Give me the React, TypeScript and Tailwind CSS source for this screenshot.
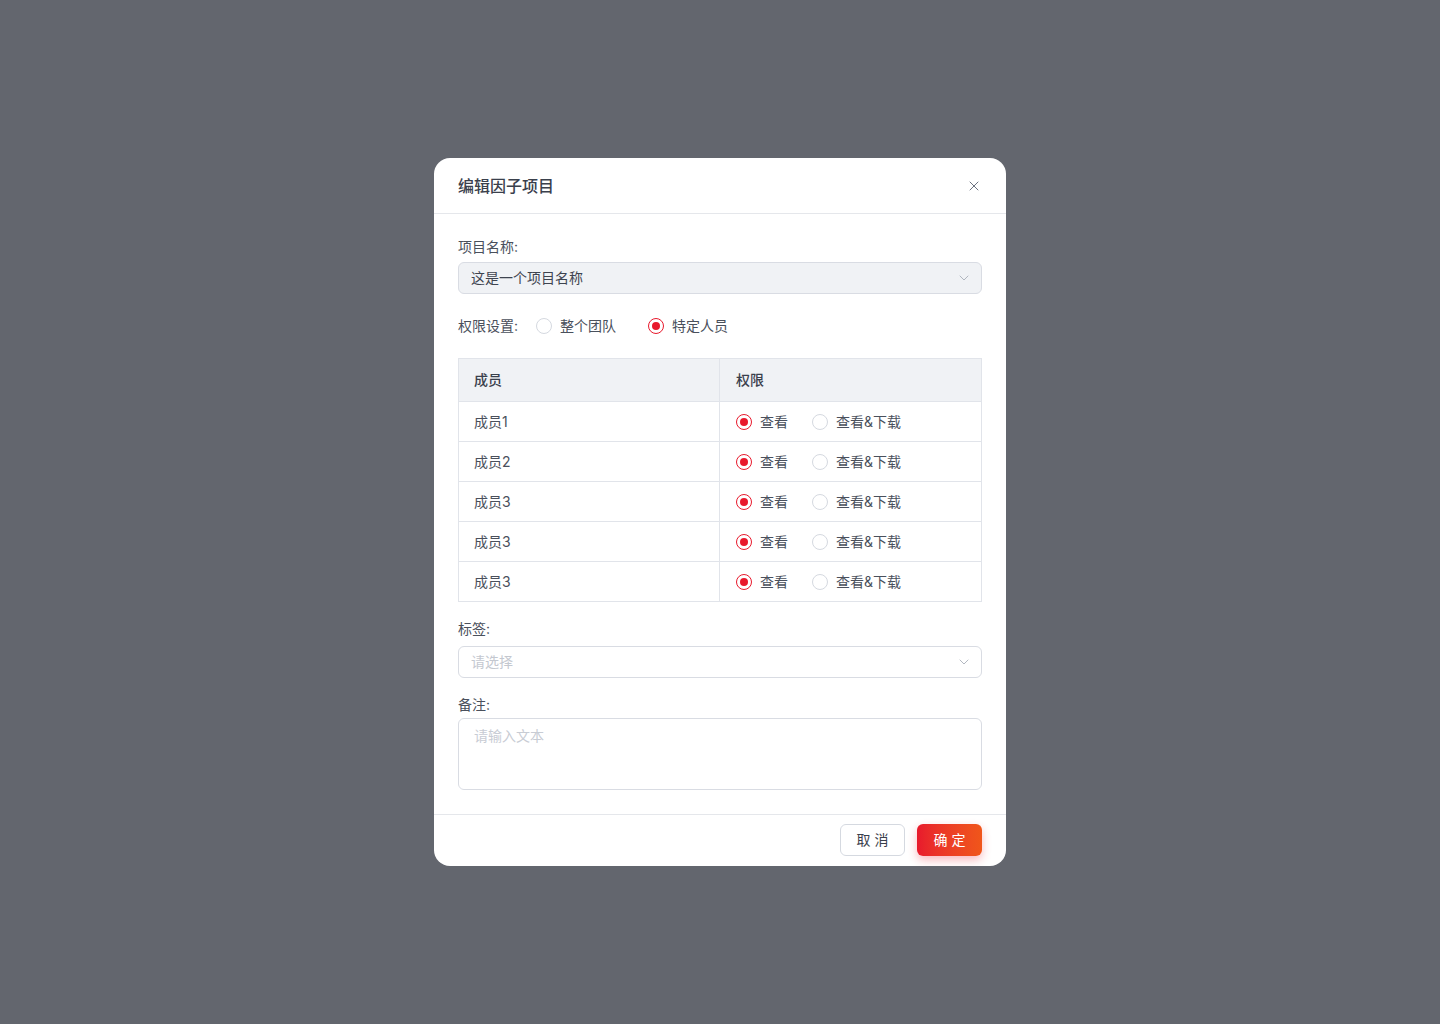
import { X, ChevronDown } from 'lucide-react'

const font = { fontFamily: 'Inter, "Noto Sans CJK SC", sans-serif' }

function Radio({ checked, label }: { checked?: boolean; label: string }) {
  return (
    <label className="flex items-center gap-2 cursor-pointer">
      {checked ? (
        <span className="w-4 h-4 rounded-full border border-[#e8192c] flex items-center justify-center bg-white">
          <span className="w-2 h-2 rounded-full bg-[#e8192c]" />
        </span>
      ) : (
        <span className="w-4 h-4 rounded-full border border-[#d5d9e0] bg-white" />
      )}
      <span className="text-sm text-[#4a505c]">{label}</span>
    </label>
  )
}

const members = ['成员1', '成员2', '成员3', '成员3', '成员3']

export default function App() {
  return (
    <div className="min-h-screen bg-[#63666e] flex items-start justify-center pt-[158px]" style={font}>
      <div className="w-[572px] bg-white rounded-2xl overflow-hidden">
        {/* header */}
        <div className="h-[56px] flex items-center justify-between px-6 border-b border-[#e5e7eb]">
          <h3 className="text-base font-medium text-[#3a404c]">编辑因子项目</h3>
          <X className="w-4 h-4 text-[#6b7280]" strokeWidth={1.5} />
        </div>

        {/* body */}
        <div className="px-6 pt-[22px] pb-6">
          <div className="text-sm leading-[22px] text-[#4a505c]">项目名称:</div>
          <div className="mt-1 h-8 rounded-md border border-[#d9dce3] bg-[#f0f2f5] flex items-center justify-between pl-3 pr-[9px]">
            <span className="text-sm text-[#3e4450]">这是一个项目名称</span>
            <ChevronDown className="w-4 h-4 text-[#a0a6b1]" strokeWidth={1.2} />
          </div>

          <div className="mt-4 h-8 flex items-center">
            <span className="text-sm text-[#4a505c] mr-[18px]">权限设置:</span>
            <div className="flex items-center gap-8">
              <Radio label="整个团队" />
              <Radio checked label="特定人员" />
            </div>
          </div>

          <div className="mt-4 border border-[#e1e4ea]">
            <div className="grid grid-cols-[261px_1fr] bg-[#f0f2f5] h-[43px] border-b border-[#e1e4ea]">
              <div className="flex items-center px-[15px] border-r border-[#e1e4ea] text-sm font-medium text-[#3a404c]">成员</div>
              <div className="flex items-center px-4 text-sm font-medium text-[#3a404c]">权限</div>
            </div>
            {members.map((m, i) => (
              <div
                key={i}
                className={`grid grid-cols-[261px_1fr] ${i < members.length - 1 ? 'h-10 border-b border-[#e1e4ea]' : 'h-[39px]'}`}
              >
                <div className="flex items-center px-[15px] border-r border-[#e1e4ea] text-sm text-[#4a505c]">{m}</div>
                <div className="flex items-center px-4 gap-6">
                  <Radio checked label="查看" />
                  <Radio label="查看&下载" />
                </div>
              </div>
            ))}
          </div>

          <div className="mt-4 text-sm leading-[22px] text-[#4a505c]">标签:</div>
          <div className="mt-1.5 h-8 rounded-md border border-[#d9dce3] bg-white flex items-center justify-between pl-3 pr-[9px]">
            <span className="text-sm text-[#c4c8d0]">请选择</span>
            <ChevronDown className="w-4 h-4 text-[#a0a6b1]" strokeWidth={1.2} />
          </div>

          <div className="mt-4 text-sm leading-[22px] text-[#4a505c]">备注:</div>
          <textarea
            className="mt-0.5 block w-full h-[72px] rounded-md border border-[#d9dce3] px-[15px] py-1.5 text-sm leading-[22px] resize-none outline-none placeholder:text-[#c8ccd4]"
            placeholder="请输入文本"
          />
        </div>

        {/* footer */}
        <div className="h-[52px] border-t border-[#e5e7eb] flex items-start justify-end gap-3 px-6 pt-[9px]">
          <button className="h-8 w-[65px] rounded-md border border-[#d5d9e0] bg-white text-sm text-[#3a404c] tracking-[4px] pl-1">
            取消
          </button>
          <button className="h-8 w-[65px] rounded-md bg-gradient-to-r from-[#e8192c] to-[#f0561a] text-sm text-white tracking-[4px] pl-1 shadow-[0_4px_10px_rgba(232,25,44,0.3)]">
            确定
          </button>
        </div>
      </div>
    </div>
  )
}
